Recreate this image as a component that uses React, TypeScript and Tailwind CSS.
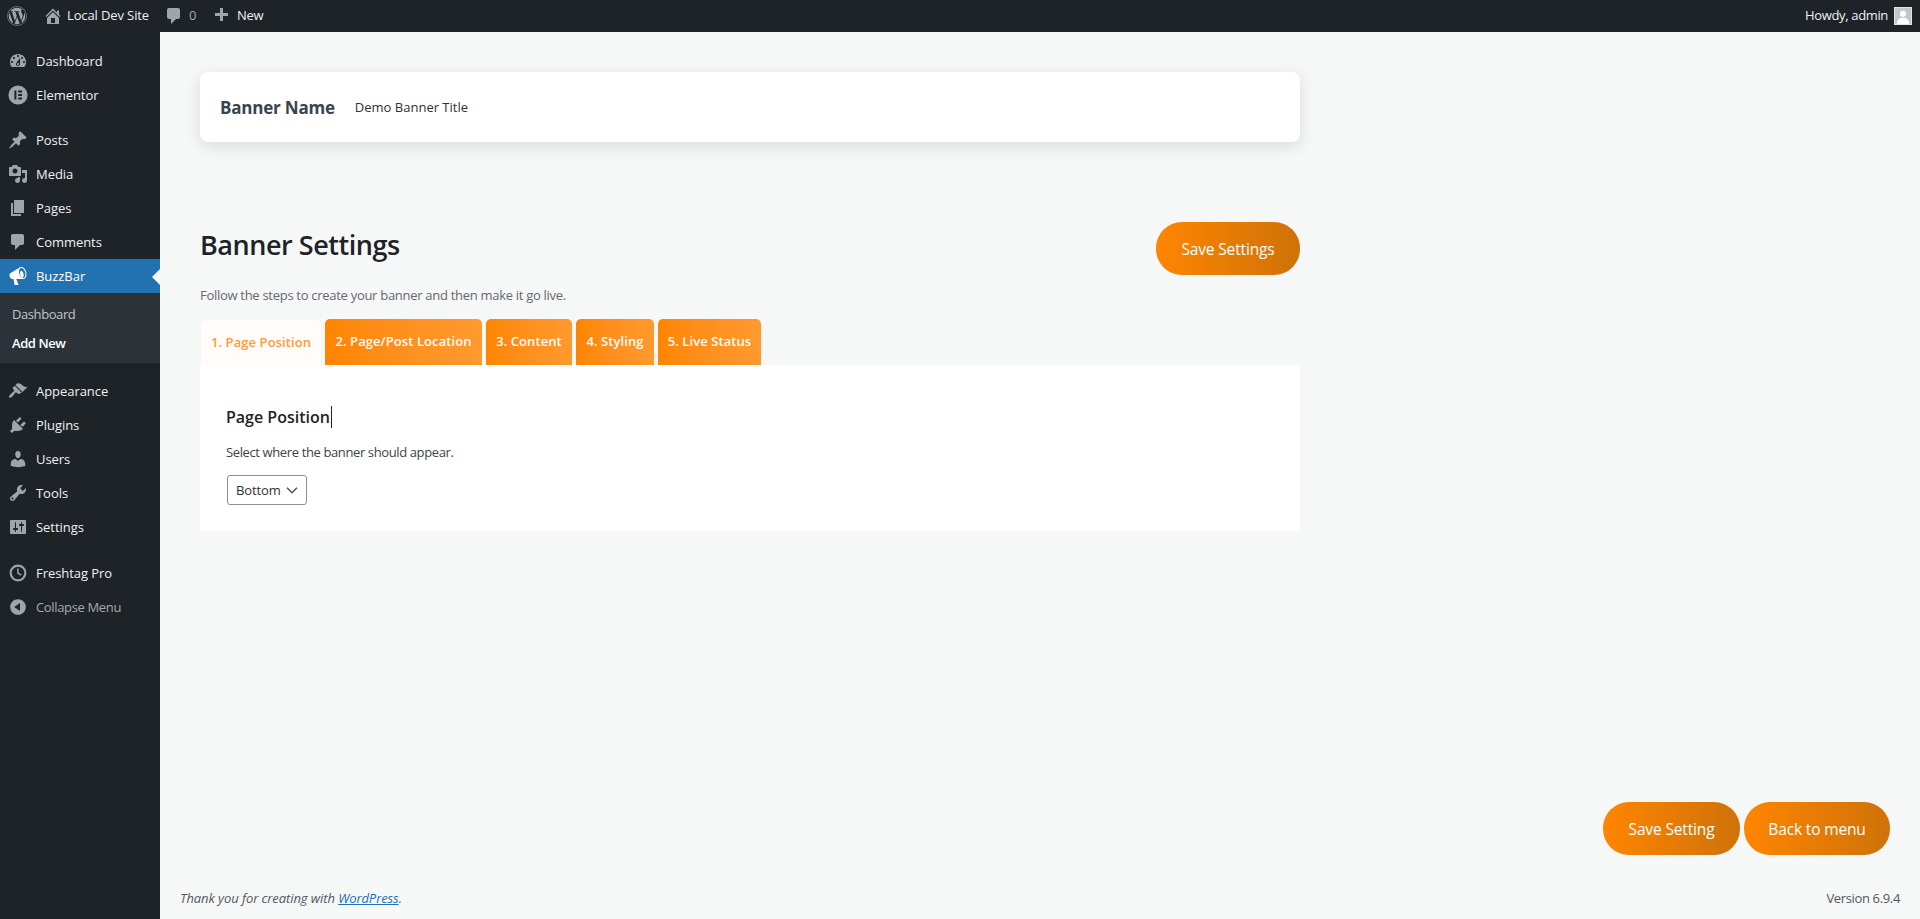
import React from "react";
import { FaWordpress } from "react-icons/fa";

const P: Record<string, string> = {
  home: "M16 8.5l1.53 1.53-1.06 1.06L10 4.62l-6.47 6.47-1.06-1.06L10 2.5l4 4v-2h2v4zm-6-2.46l6 5.99V18H4v-5.97zM12 17v-5H8v5h4z",
  comment: "M5 2h9c1.1 0 2 .9 2 2v7c0 1.1-.9 2-2 2h-2l-5 5v-5H5c-1.1 0-2-.9-2-2V4c0-1.1.9-2 2-2z",
  plus: "M17 7v3h-5v5H9v-5H4V7h5V2h3v5h5z",
  dashboard: "M3.76 16h12.48c1.1-1.37 1.76-3.11 1.76-5 0-4.42-3.58-8-8-8s-8 3.58-8 8c0 1.89.66 3.63 1.76 5zM10 4c.55 0 1 .45 1 1s-.45 1-1 1-1-.45-1-1 .45-1 1-1zM6 6c.55 0 1 .45 1 1s-.45 1-1 1-1-.45-1-1 .45-1 1-1zm8 0c.55 0 1 .45 1 1s-.45 1-1 1-1-.45-1-1 .45-1 1-1zm-5.37 5.55L12 7v6c0 1.1-.9 2-2 2s-2-.9-2-2c0-.57.24-1.08.63-1.45zM4 10c.55 0 1 .45 1 1s-.45 1-1 1-1-.45-1-1 .45-1 1-1zm12 0c.55 0 1 .45 1 1s-.45 1-1 1-1-.45-1-1 .45-1 1-1zm-5 3c0-.55-.45-1-1-1s-1 .45-1 1 .45 1 1 1 1-.45 1-1z",
  post: "M10.44 3.02l1.82-1.82 6.36 6.35-1.83 1.82c-1.05-.68-2.48-.57-3.41.36l-.75.75c-.92.93-1.04 2.35-.35 3.41l-1.83 1.82-2.41-2.41-2.8 2.79c-.42.42-3.38 2.71-3.8 2.29s1.86-3.39 2.28-3.81l2.79-2.79L4.1 9.36l1.83-1.82c1.05.69 2.48.57 3.4-.36l.75-.75c.93-.92 1.05-2.35.36-3.41z",
  media: "M13 11V4c0-.55-.45-1-1-1h-1.67L9 1H5L3.67 3H2c-.55 0-1 .45-1 1v7c0 .55.45 1 1 1h10c.55 0 1-.45 1-1zM7 4.5c1.38 0 2.5 1.12 2.5 2.5S8.38 9.5 7 9.5 4.5 8.38 4.5 7 5.62 4.5 7 4.5zM14 6h5v10.5c0 1.38-1.12 2.5-2.5 2.5S14 17.88 14 16.5s1.12-2.5 2.5-2.5c.17 0 .34.02.5.05V9h-3V6zm-4 8.05V13h2v3.5c0 1.38-1.12 2.5-2.5 2.5S7 17.88 7 16.5 8.12 14 9.5 14c.17 0 .34.02.5.05z",
  page: "M6 15V2h10v13H6zm-1 1h8v2H3V5h2v11z",
  appearance: "M14.48 11.06L7.41 3.99l1.5-1.5c.5-.56 2.3-.47 3.51.32 1.21.8 1.43 1.28 2.91 2.1 1.18.64 2.45 1.26 4.45.85zm-.71.71L6.7 4.7 4.93 6.47c-.39.39-.39 1.02 0 1.41l1.06 1.06c.39.39.39 1.03 0 1.42-.6.6-1.43 1.11-2.21 1.69-.35.26-.7.53-1.01.84-1.28 1.28-2.31 2.9-1.59 3.62.71.71 2.34-.31 3.62-1.59.31-.31.58-.66.84-1.01.58-.78 1.09-1.61 1.69-2.21.39-.39 1.02-.39 1.41 0l1.06 1.06c.39.39 1.02.39 1.41 0z",
  plugins: "M13.11 4.36L9.87 7.6 8 5.73l3.24-3.24c.35-.34 1.05-.2 1.56.32.52.51.66 1.21.31 1.55zm-8 1.77l.91-1.12 9.01 9.01-1.19.84c-.71.71-2.63 1.16-3.82 1.16H6.14L4.9 17.26c-.59.59-1.54.59-2.12 0-.59-.58-.59-1.53 0-2.12l1.24-1.24v-3.88c0-1.13.4-3.19 1.09-3.89zm7.26 3.97l3.24-3.24c.34-.35 1.04-.21 1.55.31.52.51.66 1.21.31 1.55l-3.24 3.25z",
  users: "M10 9.25c-2.27 0-2.73-3.44-2.73-3.44C7 4.02 7.82 2 9.97 2c2.16 0 2.98 2.02 2.71 3.81 0 0-.41 3.44-2.68 3.44zm0 2.57L12.72 10c2.39 0 4.52 2.33 4.52 4.53v2.49s-3.65 1.13-7.24 1.13c-3.65 0-7.24-1.13-7.24-1.13v-2.49c0-2.25 1.94-4.48 4.47-4.48z",
  tools: "M16.68 9.77c-1.34 1.34-3.3 1.67-4.95.99l-5.41 6.52c-.99.99-2.59.99-3.58 0s-.99-2.59 0-3.57l6.52-5.42c-.68-1.65-.35-3.61.99-4.95 1.28-1.28 3.12-1.62 4.72-1.06l-2.89 2.89 2.82 2.82 2.86-2.87c.53 1.58.18 3.39-1.08 4.65zM3.81 16.21c.4.39 1.04.39 1.43 0 .4-.4.4-1.04 0-1.43-.39-.4-1.03-.4-1.43 0-.39.39-.39 1.03 0 1.43z",
  settings: "M18 16V4c0-.55-.45-1-1-1H3c-.55 0-1 .45-1 1v12c0 .55.45 1 1 1h14c.55 0 1-.45 1-1zM8 11h1c.55 0 1 .45 1 1s-.45 1-1 1H8v1.5c0 .28-.22.5-.5.5s-.5-.22-.5-.5V13H6c-.55 0-1-.45-1-1s.45-1 1-1h1V5.5c0-.28.22-.5.5-.5s.5.22.5.5V11zm5-2h-1c-.55 0-1-.45-1-1s.45-1 1-1h1V5.5c0-.28.22-.5.5-.5s.5.22.5.5V7h1c.55 0 1 .45 1 1s-.45 1-1 1h-1v5.5c0 .28-.22.5-.5.5s-.5-.22-.5-.5V9z",
  collapse: "M10 2.16c4.33 0 7.84 3.51 7.84 7.84s-3.51 7.84-7.84 7.84S2.16 14.33 2.16 10 5.71 2.16 10 2.16zm2 11.72V6.12L6.18 9.97z",
  elementor: "M10 .4a9.6 9.6 0 1 0 0 19.2A9.6 9.6 0 0 0 10 .4zM6.4 5.6h2v8.8h-2V5.6zm3.8 0h3.8v1.9h-3.8V5.6zm0 3.45h3.8v1.9h-3.8v-1.9zm0 3.45h3.8v1.9h-3.8v-1.9z",
  clock: "M10 1.6a8.4 8.4 0 1 0 0 16.8 8.4 8.4 0 0 0 0-16.8zm0 2.1a6.3 6.3 0 1 1 0 12.6 6.3 6.3 0 0 1 0-12.6zM9.2 5.6v5l3.6 2.2.9-1.3-3-1.8V5.6H9.2z",
  megaphone: "M18.15 5.94c.46 1.62.38 3.22-.02 4.48-.42 1.28-1.26 2.18-2.3 2.48-.16.06-.26.06-.4.06-.06.02-.12.02-.18.02-.06.02-.14.02-.22.02h-6.8l2.22 5.5c.02.14-.06.26-.14.34-.08.1-.24.16-.34.16H6.95c-.1 0-.26-.06-.34-.16-.08-.08-.16-.2-.14-.34l-1-5.5H4.25l-.02-.02c-.5.06-1.08-.18-1.54-.62s-.88-1.08-1.06-1.88c-.24-.8-.2-1.56-.02-2.2.18-.62.58-1.08 1.06-1.3l.02-.02 9-5.4c.1-.06.18-.1.24-.16.06-.04.14-.08.24-.12.16-.08.28-.12.5-.18 1.04-.3 2.24.1 3.22.98s1.84 2.24 2.26 3.86zm-2.58 5.98h-.02c.4-.1.74-.34 1.04-.7.58-.7.86-1.76.86-3.04 0-.64-.1-1.3-.28-1.98-.34-1.36-1.02-2.5-1.78-3.24s-1.68-1.1-2.46-.88c-.82.22-1.4.96-1.7 2-.32 1.04-.28 2.36.06 3.72.38 1.36 1 2.5 1.8 3.24.78.74 1.62 1.1 2.48.88zm-2.54-7.08c.22-.04.42-.02.62.04.38.16.76.48 1.1 1s.58 1.14.76 1.8c.18.68.24 1.35.2 1.96-.04.62-.2 1.12-.48 1.44-.14.18-.3.3-.5.34-.2.06-.42.02-.62-.04-.38-.16-.76-.48-1.1-1s-.6-1.14-.78-1.82c-.16-.66-.22-1.32-.18-1.94.06-.6.22-1.1.48-1.42.16-.18.32-.3.5-.36z",
};

function Ico({ n, c = "w-5 h-5", color = "text-[#a0a5aa]" }: { n: string; c?: string; color?: string }) {
  return (
    <svg viewBox="0 0 20 20" className={`${c} ${color} shrink-0 fill-current`}>
      <path d={P[n]} fillRule="evenodd" />
    </svg>
  );
}

function Item({ n, label, active, muted }: { n: string; label: string; active?: boolean; muted?: boolean }) {
  return (
    <div className={`relative h-[34px] flex items-center pl-[8px] gap-[8px] ${muted ? "tracking-[-0.35px] text-[#a7aaad]" : active ? "tracking-[-0.05px] bg-[#2271b1] text-white" : "tracking-[-0.05px] text-[#f0f0f1]"}`}>
      <Ico n={n} color={active ? "text-white" : "text-[#a0a5aa]"} />
      <span className="pt-[2px]">{label}</span>
      {active && <span className="absolute right-0 top-[10px] border-y-[8px] border-r-[8px] border-y-transparent border-r-[#f6f7f7]" />}
    </div>
  );
}

const orange = "bg-gradient-to-r from-[#ff8500] to-[#cf7208] text-white rounded-[26px] h-[53px] flex items-center justify-center pt-[2px] text-[15.5px] tracking-[-0.15px]";

function Tab({ label, active, w }: { label: string; active?: boolean; w: string }) {
  return (
    <div className={`${w} rounded-t-[5px] flex items-center justify-center font-semibold text-[13px] tracking-[0.08px] ${active ? "h-[45px] mt-px bg-[#fffcfa] text-[#ff9a3c]" : "h-[46px] bg-gradient-to-r from-[#ff8500] to-[#ff9a2e] text-white"}`}>
      {label}
    </div>
  );
}

export default function App() {
  return (
    <div className="h-[919px] flex flex-col overflow-hidden bg-[#f6f7f7] text-[13px] tracking-[-0.35px]" style={{ fontFamily: '"Open Sans", "Noto Sans", sans-serif' }}>
      <header className="h-[32px] shrink-0 bg-[#1d2327] text-[#f0f0f1] flex items-center pl-[7px] pr-[8px]">
        <FaWordpress className="w-[20px] h-[20px] text-[#a0a5aa]" />
        <Ico n="home" c="w-5 h-5 ml-[16px]" />
        <span className="ml-[4px] tracking-[-0.12px]">Local Dev Site</span>
        <Ico n="comment" c="w-5 h-5 ml-[15px]" />
        <span className="ml-[5px] text-[#a7aaad]">0</span>
        <Ico n="plus" c="w-5 h-5 ml-[15px]" />
        <span className="ml-[6px]">New</span>
        <span className="ml-auto">Howdy, admin</span>
        <div className="ml-[6px] w-[18px] h-[18px] bg-[#c4c6c8] border border-[#e3e4e5] flex items-end justify-center overflow-hidden">
          <svg viewBox="0 0 18 18" className="w-[16px] h-[16px] fill-white"><circle cx="9" cy="6.5" r="3.5" /><path d="M2 18c0-5 3-7 7-7s7 2 7 7z" /></svg>
        </div>
      </header>
      <div className="flex-1 flex min-h-0">
        <aside className="w-[160px] shrink-0 bg-[#1d2327] pt-[12px]">
          <Item n="dashboard" label="Dashboard" />
          <Item n="elementor" label="Elementor" />
          <div className="h-[11px]" />
          <Item n="post" label="Posts" />
          <Item n="media" label="Media" />
          <Item n="page" label="Pages" />
          <Item n="comment" label="Comments" />
          <Item n="megaphone" label="BuzzBar" active />
          <div className="h-[70px] bg-[#2c3338] flex flex-col pt-[7px] pl-[12px] tracking-[-0.42px]">
            <div className="h-[29px] flex items-center text-[#c3c4c7]">Dashboard</div>
            <div className="h-[29px] flex items-center text-white font-semibold">Add New</div>
          </div>
          <div className="h-[11px]" />
          <Item n="appearance" label="Appearance" />
          <Item n="plugins" label="Plugins" />
          <Item n="users" label="Users" />
          <Item n="tools" label="Tools" />
          <Item n="settings" label="Settings" />
          <div className="h-[12px]" />
          <Item n="clock" label="Freshtag Pro" />
          <Item n="collapse" label="Collapse Menu" muted />
        </aside>
        <main className="flex-1 flex flex-col min-w-0">
          <div className="flex-1 pl-[40px] pt-[40px] w-[1140px]">
            <div className="h-[70px] bg-white rounded-[8px] shadow-[0_4px_16px_rgba(0,0,0,0.12)] flex items-center pl-[20px] pt-[2px]">
              <span className="text-[17px] font-bold text-[#3a4350] tracking-[-0.2px]">Banner Name</span>
              <span className="ml-[20px] text-[#2c3338] tracking-[0px]">Demo Banner Title</span>
            </div>
            <div className="mt-[80px] flex items-start justify-between">
              <h1 className="mt-[4px] text-[27px] leading-[38px] font-semibold text-[#1d2327] tracking-[-0.45px]">Banner Settings</h1>
              <button className={`${orange} w-[144px]`}>Save Settings</button>
            </div>
            <p className="mt-[11px] text-[#646970] leading-[18px] tracking-[-0.29px]">Follow the steps to create your banner and then make it go live.</p>
            <div className="mt-[15px] flex gap-[4px] pl-[1px]">
              <Tab label="1. Page Position" active w="w-[120px]" />
              <Tab label="2. Page/Post Location" w="w-[157px]" />
              <Tab label="3. Content" w="w-[86px]" />
              <Tab label="4. Styling" w="w-[78px]" />
              <Tab label="5. Live Status" w="w-[103px]" />
            </div>
            <section className="h-[166px] bg-white pl-[26px] pt-[39px]">
              <h2 className="flex items-center h-[26px] text-[16px] font-semibold text-[#1d2327] tracking-[0px]">
                Page Position<span className="ml-px w-px h-[22px] bg-[#1d2327]" />
              </h2>
              <p className="mt-[13px] text-[13px] leading-[18px] text-[#3c434a] tracking-[-0.38px]">Select where the banner should appear.</p>
              <div className="mt-[14px] ml-px w-[80px] h-[30px] border border-[#8c8f94] rounded-[3px] flex items-center justify-between pl-[8px] pr-[5px] pt-px text-[#2c3338] bg-white tracking-[-0.1px]">
                Bottom
                <svg viewBox="0 0 20 20" className="w-[18px] h-[18px] -mt-px fill-none stroke-[#50575e] stroke-[1.8]"><path d="M4.5 7.5l5.5 5.5 5.5-5.5" /></svg>
              </div>
            </section>
          </div>
          <div className="flex justify-end gap-[4px] pr-[30px]">
            <button className={`${orange} w-[137px]`}>Save Setting</button>
            <button className={`${orange} w-[146px]`}>Back to menu</button>
          </div>
          <footer className="h-[64px] flex items-center justify-between pl-[20px] pr-[20px] pt-[24px] text-[#50575e]">
            <span className="italic tracking-[-0.08px]">Thank you for creating with <span className="text-[#2271b1] underline">WordPress</span>.</span>
            <span>Version 6.9.4</span>
          </footer>
        </main>
      </div>
    </div>
  );
}
